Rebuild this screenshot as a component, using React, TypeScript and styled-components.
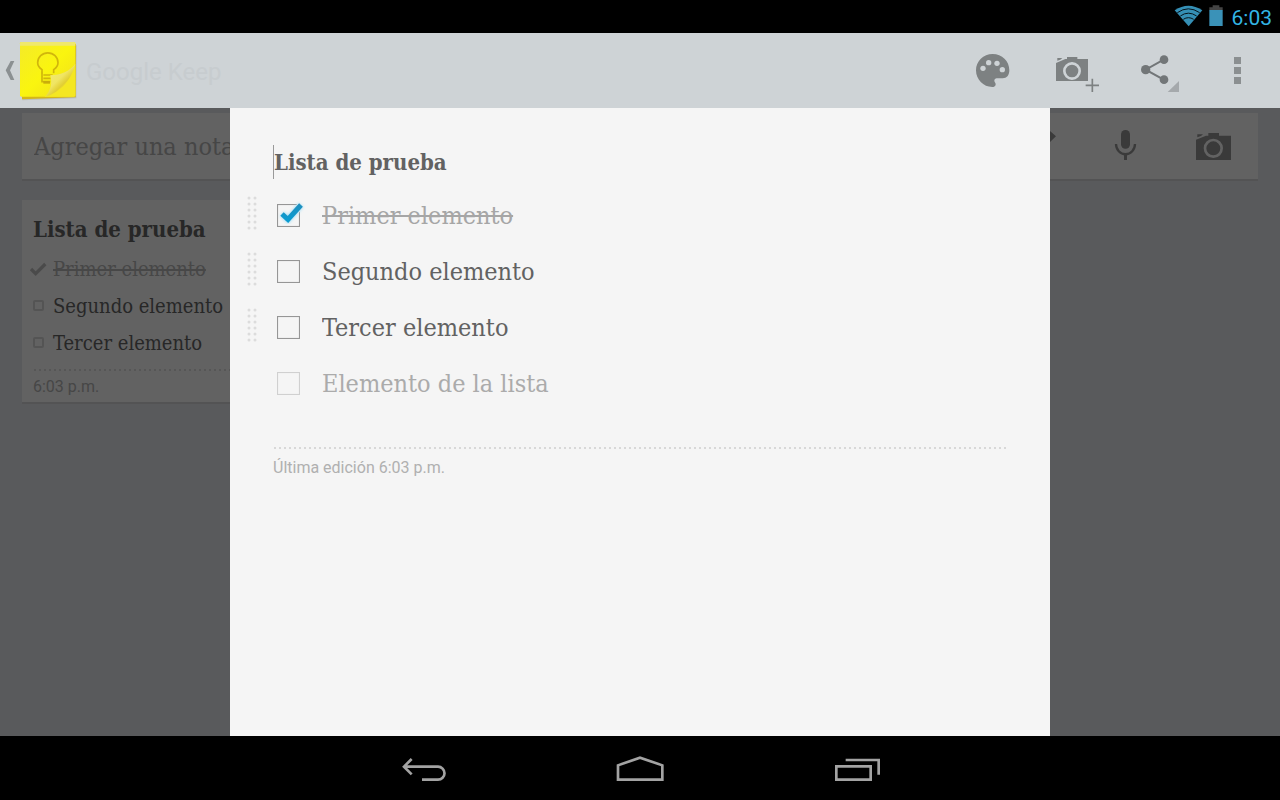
import React, { useState } from "react";
import styled, { createGlobalStyle } from "styled-components";

const slab = `"Roboto Slab", "DejaVu Serif Condensed", "DejaVu Serif", serif`;
const sans = `Roboto, "Liberation Sans", sans-serif`;

const GlobalStyle = createGlobalStyle`
  * { box-sizing: border-box; }
  body { margin: 0; background: #000; font-family: ${sans}; }
  button, input { font: inherit; margin: 0; padding: 0; border: 0; background: none; color: inherit; outline: none; }
  button { cursor: pointer; }
  svg { display: block; }
  ul { list-style: none; margin: 0; padding: 0; }
`;

const Screen = styled.div`
  display: flex;
  flex-direction: column;
  min-height: 100vh;
`;

const StatusBar = styled.div`
  display: flex;
  align-items: center;
  justify-content: flex-end;
  gap: 4px;
  height: 33px;
  padding-right: 8px;
  background: #000;
`;

const Clock = styled.time`
  padding: 3px 0 0 4px;
  font-size: 21px;
  line-height: 32px;
  color: #33b5e5;
`;

const ActionBar = styled.header`
  display: flex;
  align-items: center;
  justify-content: space-between;
  height: 75px;
  padding-right: 7px;
  background: #ced3d6;
`;

const HomeButton = styled.button`
  display: flex;
  align-items: center;
  gap: 2px;
  padding-left: 4px;
`;

const AppTitle = styled.span`
  padding: 2px 0 0 4px;
  font-size: 24px;
  line-height: 32px;
  color: #c7cccf;
`;

const Actions = styled.div`
  display: flex;
`;

const IconButton = styled.button<{ $width: number; $height: number }>`
  display: flex;
  align-items: center;
  justify-content: center;
  width: ${(p) => p.$width}px;
  height: ${(p) => p.$height}px;
`;

const Stage = styled.div`
  position: relative;
  flex: 1;
  display: flex;
  justify-content: center;
`;

const Board = styled.main`
  position: absolute;
  inset: 0;
  padding: 5px 22px;
  background: #dee1e5;
  overflow: hidden;
`;

const AddBar = styled.div`
  display: flex;
  align-items: center;
  height: 66px;
  padding: 0 1px 0 12px;
  background: #f5f5f5;
  box-shadow: 0 2px 0 #cfd0d2;
`;

const AddInput = styled.input`
  flex: 1;
  min-width: 0;
  height: 40px;
  font-family: ${slab};
  font-size: 25px;
  color: #b0b0b0;
  &::placeholder { color: #b0b0b0; opacity: 1; }
`;

const Notes = styled.section`
  display: grid;
  grid-template-columns: repeat(3, 1fr);
  gap: 21px;
  padding-top: 21px;
`;

const NoteCard = styled.article`
  padding: 12px 11px 3px;
  background: #f5f5f5;
  box-shadow: 0 2px 0 #cfd0d2;
`;

const NoteTitle = styled.h2`
  margin: 0 0 4px;
  font-family: ${slab};
  font-size: 22px;
  line-height: 34px;
  font-weight: 700;
  color: #626262;
`;

const NoteItem = styled.li<{ $done: boolean }>`
  display: flex;
  align-items: center;
  height: 37px;
  font-family: ${slab};
  font-size: 20px;
  color: ${(p) => (p.$done ? "#b2b2b2" : "#626262")};
  text-decoration: ${(p) => (p.$done ? "line-through" : "none")};
`;

const NoteMark = styled.span`
  display: flex;
  width: 20px;
`;

const SmallBox = styled.span`
  width: 11px;
  height: 11px;
  border: 2px solid #d2d2d2;
  border-radius: 2px;
`;

const DottedRule = styled.hr<{ $top: number }>`
  height: 4px;
  margin: ${(p) => p.$top}px 0 0;
  border: 0;
  background: radial-gradient(circle at 2px 2px, #d8d8d8 0, #d8d8d8 1px, transparent 1px) 0 0 / 5px 4px repeat-x;
`;

const Stamp = styled.p<{ $top: number }>`
  margin: ${(p) => p.$top}px 0 0;
  font-size: 16px;
  line-height: 24px;
  color: #b0b0b0;
`;

const Scrim = styled.div`
  position: absolute;
  inset: 0;
  background: rgba(0, 0, 0, 0.6);
`;

const Editor = styled.section`
  position: relative;
  width: 100%;
  max-width: 820px;
  padding: 37px 43px;
  background: #f5f5f5;
`;

const TitleInput = styled.input`
  display: block;
  width: 100%;
  height: 34px;
  border-left: 1px solid #999;
  font-family: ${slab};
  font-size: 22px;
  font-weight: 700;
  color: #626262;
`;

const EditorList = styled.ul`
  margin: 8px 0 0 -26px;
`;

const EditorRow = styled.li`
  display: flex;
  align-items: center;
  height: 56px;
`;

const Handle = styled.span`
  width: 10px;
  margin-right: 20px;
`;

const CheckWrap = styled.span`
  position: relative;
  width: 23px;
  height: 23px;
  margin-right: 22px;
`;

const Check = styled.input<{ $dim?: boolean }>`
  display: block;
  appearance: none;
  width: 23px;
  height: 23px;
  border: 1px solid ${(p) => (p.$dim ? "#d0d0d0" : "#969696")};
  box-shadow: inset 0 0 1px ${(p) => (p.$dim ? "#d8d8d8" : "#a8a8a8")};
`;

const Tick = styled.svg`
  position: absolute;
  left: 0;
  top: -3px;
  pointer-events: none;
  overflow: visible;
`;

const ItemInput = styled.input<{ $done?: boolean }>`
  flex: 1;
  min-width: 0;
  height: 40px;
  font-family: ${slab};
  font-size: 25px;
  color: ${(p) => (p.$done ? "#a6a6a6" : "#626262")};
  text-decoration: ${(p) => (p.$done ? "line-through" : "none")};
  &::placeholder { color: #ababab; opacity: 1; }
`;

const NavBar = styled.nav`
  display: flex;
  justify-content: center;
  height: 64px;
  background: #000;
`;

const WifiIcon = () => (
  <svg width="30" height="23" viewBox="39 15 90 69" aria-hidden="true">
    <path d="M41 31Q82 4 124 31L83 79Z" fill="#358fb5" />
    <g fill="none" stroke="#06141b" strokeWidth="3">
      <path d="M49 38Q82 15 116 38" />
      <path d="M58 48Q82 31 107 48" />
      <path d="M67 58Q82 48 98 58" />
    </g>
  </svg>
);

const BatteryIcon = () => (
  <svg width="16" height="23" viewBox="141 15 48 69" aria-hidden="true">
    <path d="M155 16h20v6h10v9h-40v-9h10z" fill="#444" />
    <path d="M145 30h40v48h-40z" fill="#3a92b8" />
  </svg>
);

const ChevronIcon = () => (
  <svg width="12" height="21" viewBox="12 90 36 63" aria-hidden="true">
    <path d="M32 93h11l-13 28 13 29h-11L17 121z" fill="#8b9092" />
  </svg>
);

const KeepLogo = () => (
  <svg width="62" height="61" viewBox="54 30 186 183" aria-hidden="true">
    <defs>
      <linearGradient id="paper" x1="0" y1="0" x2="1" y2="1">
        <stop offset="0" stopColor="#f4ea2a" />
        <stop offset="0.5" stopColor="#faf50f" />
        <stop offset="1" stopColor="#f0dc1c" />
      </linearGradient>
      <linearGradient id="curl" gradientUnits="userSpaceOnUse" x1="152" y1="136" x2="196" y2="182">
        <stop offset="0" stopColor="#f1e96c" />
        <stop offset="0.4" stopColor="#f0e563" />
        <stop offset="0.7" stopColor="#e2cf33" />
        <stop offset="1" stopColor="#f3e428" />
      </linearGradient>
    </defs>
    <path d="M64 44L230 46L229 205L67 211Z" fill="#aeb2a4" opacity="0.6" />
    <path d="M63 50L228 42L227 202L66 208Z" fill="#d4b618" />
    <path d="M60 40q0-4 4-4h158q4 0 4 4v156q0 4-4 4H64q-4 0-4-4z" fill="url(#paper)" />
    <path d="M60 40q0-4 4-4h158q4 0 4 4v7H60z" fill="#efe86c" />
    <g fill="none" stroke="#d0b60c" strokeWidth="5">
      <path d="M126 130v-11c-8-6-13-12-13-21a30 29 0 0 1 61 0c0 9-5 15-13 21v11" />
      <path d="M126 128v27h25M130 135h28M130 145h22" />
    </g>
    <path d="M130 153h20v8h-20z" fill="#c9ad0b" />
    <path d="M226 101C215 123 190 134 151 136C156 160 151 184 133 200H222q4 0 4-4Z" fill="#f4e722" />
    <path d="M226 101C208 124 184 134 151 136C157 160 153 181 136 200C172 190 212 158 226 101Z" fill="url(#curl)" />
  </svg>
);

const PaletteIcon = () => (
  <svg width="36" height="37" viewBox="45 66 108 111" aria-hidden="true">
    <path d="M98 72C70 72 48 94 48 121C48 149 70 171 97 171C105 171 109 165 106 159C100 151 104 145 113 145H128C140 145 148 136 148 121C148 93 126 72 98 72Z" fill="#7d8182" />
    <g fill="#ced3d6">
      <circle cx="69" cy="115" r="8" />
      <circle cx="86" cy="98" r="8" />
      <circle cx="111" cy="100" r="8" />
      <circle cx="127" cy="119" r="8" />
    </g>
  </svg>
);

const CameraPlusIcon = () => (
  <svg width="48" height="49" viewBox="279 48 144 147" aria-hidden="true">
    <path d="M288 99L316 87H321V81H352V87H384V153H288Z" fill="#7d8182" />
    <path d="M292 84h15l-6 5-9 3z" fill="#7d8182" />
    <circle cx="336" cy="123" r="23" fill="none" stroke="#ced3d6" strokeWidth="8" />
    <path d="M397 146v40M377 166h40" stroke="#7d8182" strokeWidth="5" />
  </svg>
);

const ShareIcon = () => (
  <svg width="48" height="49" viewBox="531 48 144 147" aria-hidden="true">
    <path d="M611 89L557 119L611 149" fill="none" stroke="#727678" strokeWidth="6" />
    <g fill="#727678">
      <circle cx="612" cy="89" r="13" />
      <circle cx="557" cy="119" r="14" />
      <circle cx="612" cy="149" r="13" />
    </g>
    <path d="M657 153v33h-34z" fill="#a5a9ac" />
  </svg>
);

const OverflowIcon = () => (
  <svg width="12" height="27" viewBox="816 81 36 81" aria-hidden="true">
    <path d="M822 81h21v21h-21zM822 111h21v21h-21zM822 141h21v21h-21z" fill="#8b8f91" />
  </svg>
);

const PencilIcon = () => (
  <svg width="40" height="40" viewBox="-39 78 120 120" aria-hidden="true">
    <path d="M60 93L78 109L60 126L42 110ZM36 116L54 133L-2 188H-20V171Z" fill="#919191" />
  </svg>
);

const MicIcon = () => (
  <svg width="40" height="40" viewBox="225 78 120 120" aria-hidden="true">
    <rect x="273" y="90" width="27" height="56" rx="13" fill="#919191" />
    <path d="M258 132a28 30 0 0 0 57 0" fill="none" stroke="#919191" strokeWidth="7" />
    <path d="M282 160h9v20h-9z" fill="#919191" />
  </svg>
);

const CameraIcon = () => (
  <svg width="40" height="40" viewBox="489 78 120 120" aria-hidden="true">
    <path d="M498 119L528 107H535V99H567V107H603V180H498Z" fill="#919191" />
    <path d="M502 103h17l-6 5-11 4z" fill="#919191" />
    <circle cx="550" cy="145" r="25" fill="none" stroke="#f5f5f5" strokeWidth="8" />
  </svg>
);

const SmallTickSvg = styled.svg`
  overflow: visible;
`;

const SmallTick = () => (
  <SmallTickSvg width="20" height="16" viewBox="99 33 60 48" aria-hidden="true">
    <path d="M93 57L107 71L136 42" fill="none" stroke="#bababa" strokeWidth="10" />
  </SmallTickSvg>
);

const HandleDots = () => (
  <svg width="10" height="40" viewBox="0 0 10 40" aria-hidden="true">
    {[2, 8, 14, 20, 26, 32].map((y) => (
      <g key={y} fill="#dcdcdc">
        <circle cx="2" cy={y + 1} r="1.5" />
        <circle cx="8" cy={y + 1} r="1.5" />
      </g>
    ))}
  </svg>
);

const BigTick = () => (
  <Tick width="28" height="28" viewBox="0 0 28 28" aria-hidden="true">
    <defs>
      <filter id="glow" x="-30%" y="-30%" width="160%" height="160%">
        <feGaussianBlur stdDeviation="1.6" />
      </filter>
      <linearGradient id="tick" x1="0" y1="0" x2="0" y2="1">
        <stop offset="0" stopColor="#1f8fbe" />
        <stop offset="1" stopColor="#0a9bd0" />
      </linearGradient>
    </defs>
    <path d="M5 13L11 18.500L24 4" fill="none" stroke="#f5f5f5" strokeWidth="7" />
    <path d="M5 13L11 18.500L24 4" fill="none" stroke="#9fdcf5" strokeWidth="6" filter="url(#glow)" />
    <path d="M5 13L11 18.500L24 4" fill="none" stroke="url(#tick)" strokeWidth="5" />
  </Tick>
);

const BackIcon = () => (
  <svg width="48" height="32" viewBox="30 51 144 96" aria-hidden="true">
    <path d="M65 72L42 95L65 118M42 95H144a19 19 0 0 1 0 39H96" fill="none" stroke="#a3a3a3" strokeWidth="8" />
  </svg>
);

const HomeIcon = () => (
  <svg width="48" height="32" viewBox="678 51 144 96" aria-hidden="true">
    <path d="M684 134V91L750 68L817 91V134Z" fill="none" stroke="#a3a3a3" strokeWidth="8" />
  </svg>
);

const RecentsIcon = () => (
  <svg width="48" height="32" viewBox="1326 51 144 96" aria-hidden="true">
    <path d="M1339 94H1442V134H1339ZM1367 75H1466V119" fill="none" stroke="#a3a3a3" strokeWidth="8" />
  </svg>
);

const startItems = [
  { id: 1, text: "Primer elemento", done: true },
  { id: 2, text: "Segundo elemento", done: false },
  { id: 3, text: "Tercer elemento", done: false },
];

export default function App() {
  const [title, setTitle] = useState("Lista de prueba");
  const [items, setItems] = useState(startItems);

  const update = (id: number, change: Partial<(typeof startItems)[0]>) =>
    setItems(items.map((item) => (item.id === id ? { ...item, ...change } : item)));

  return (
    <Screen>
      <GlobalStyle />
      <StatusBar>
        <WifiIcon />
        <BatteryIcon />
        <Clock>6:03</Clock>
      </StatusBar>

      <ActionBar>
        <HomeButton type="button">
          <ChevronIcon />
          <KeepLogo />
          <AppTitle>Google Keep</AppTitle>
        </HomeButton>
        <Actions>
          <IconButton type="button" $width={84} $height={75} aria-label="Cambiar color"><PaletteIcon /></IconButton>
          <IconButton type="button" $width={84} $height={75} aria-label="Agregar imagen"><CameraPlusIcon /></IconButton>
          <IconButton type="button" $width={84} $height={75} aria-label="Compartir"><ShareIcon /></IconButton>
          <IconButton type="button" $width={70} $height={75} aria-label="Más opciones"><OverflowIcon /></IconButton>
        </Actions>
      </ActionBar>

      <Stage>
        <Board>
          <AddBar>
            <AddInput aria-label="Agregar una nota" placeholder="Agregar una nota" />
            <IconButton type="button" $width={88} $height={66} aria-label="Nota nueva"><PencilIcon /></IconButton>
            <IconButton type="button" $width={88} $height={66} aria-label="Nota de voz"><MicIcon /></IconButton>
            <IconButton type="button" $width={88} $height={66} aria-label="Nota con foto"><CameraIcon /></IconButton>
          </AddBar>
          <Notes>
            <NoteCard>
              <NoteTitle>{title}</NoteTitle>
              <ul>
                {items.map((item) => (
                  <NoteItem key={item.id} $done={item.done}>
                    <NoteMark>{item.done ? <SmallTick /> : <SmallBox />}</NoteMark>
                    <span>{item.text}</span>
                  </NoteItem>
                ))}
              </ul>
              <DottedRule $top={7} />
              <Stamp $top={3}>6:03 p.m.</Stamp>
            </NoteCard>
          </Notes>
        </Board>
        <Scrim />
        <Editor role="dialog" aria-label="Editar nota">
          <TitleInput aria-label="Título" value={title} onChange={(e) => setTitle(e.target.value)} />
          <EditorList>
            {items.map((item) => (
              <EditorRow key={item.id}>
                <Handle><HandleDots /></Handle>
                <CheckWrap>
                  <Check
                    type="checkbox"
                    aria-label={item.text}
                    checked={item.done}
                    onChange={(e) => update(item.id, { done: e.target.checked })}
                  />
                  {item.done && <BigTick />}
                </CheckWrap>
                <ItemInput
                  aria-label="Elemento"
                  $done={item.done}
                  value={item.text}
                  onChange={(e) => update(item.id, { text: e.target.value })}
                />
              </EditorRow>
            ))}
            <EditorRow>
              <Handle />
              <CheckWrap>
                <Check type="checkbox" $dim disabled aria-label="Elemento nuevo" />
              </CheckWrap>
              <ItemInput aria-label="Elemento de la lista" placeholder="Elemento de la lista" />
            </EditorRow>
          </EditorList>
          <DottedRule $top={35} />
          <Stamp $top={6}>Última edición 6:03 p.m.</Stamp>
        </Editor>
      </Stage>

      <NavBar>
        <IconButton type="button" $width={216} $height={64} aria-label="Atrás"><BackIcon /></IconButton>
        <IconButton type="button" $width={216} $height={64} aria-label="Inicio"><HomeIcon /></IconButton>
        <IconButton type="button" $width={216} $height={64} aria-label="Recientes"><RecentsIcon /></IconButton>
      </NavBar>
    </Screen>
  );
}
